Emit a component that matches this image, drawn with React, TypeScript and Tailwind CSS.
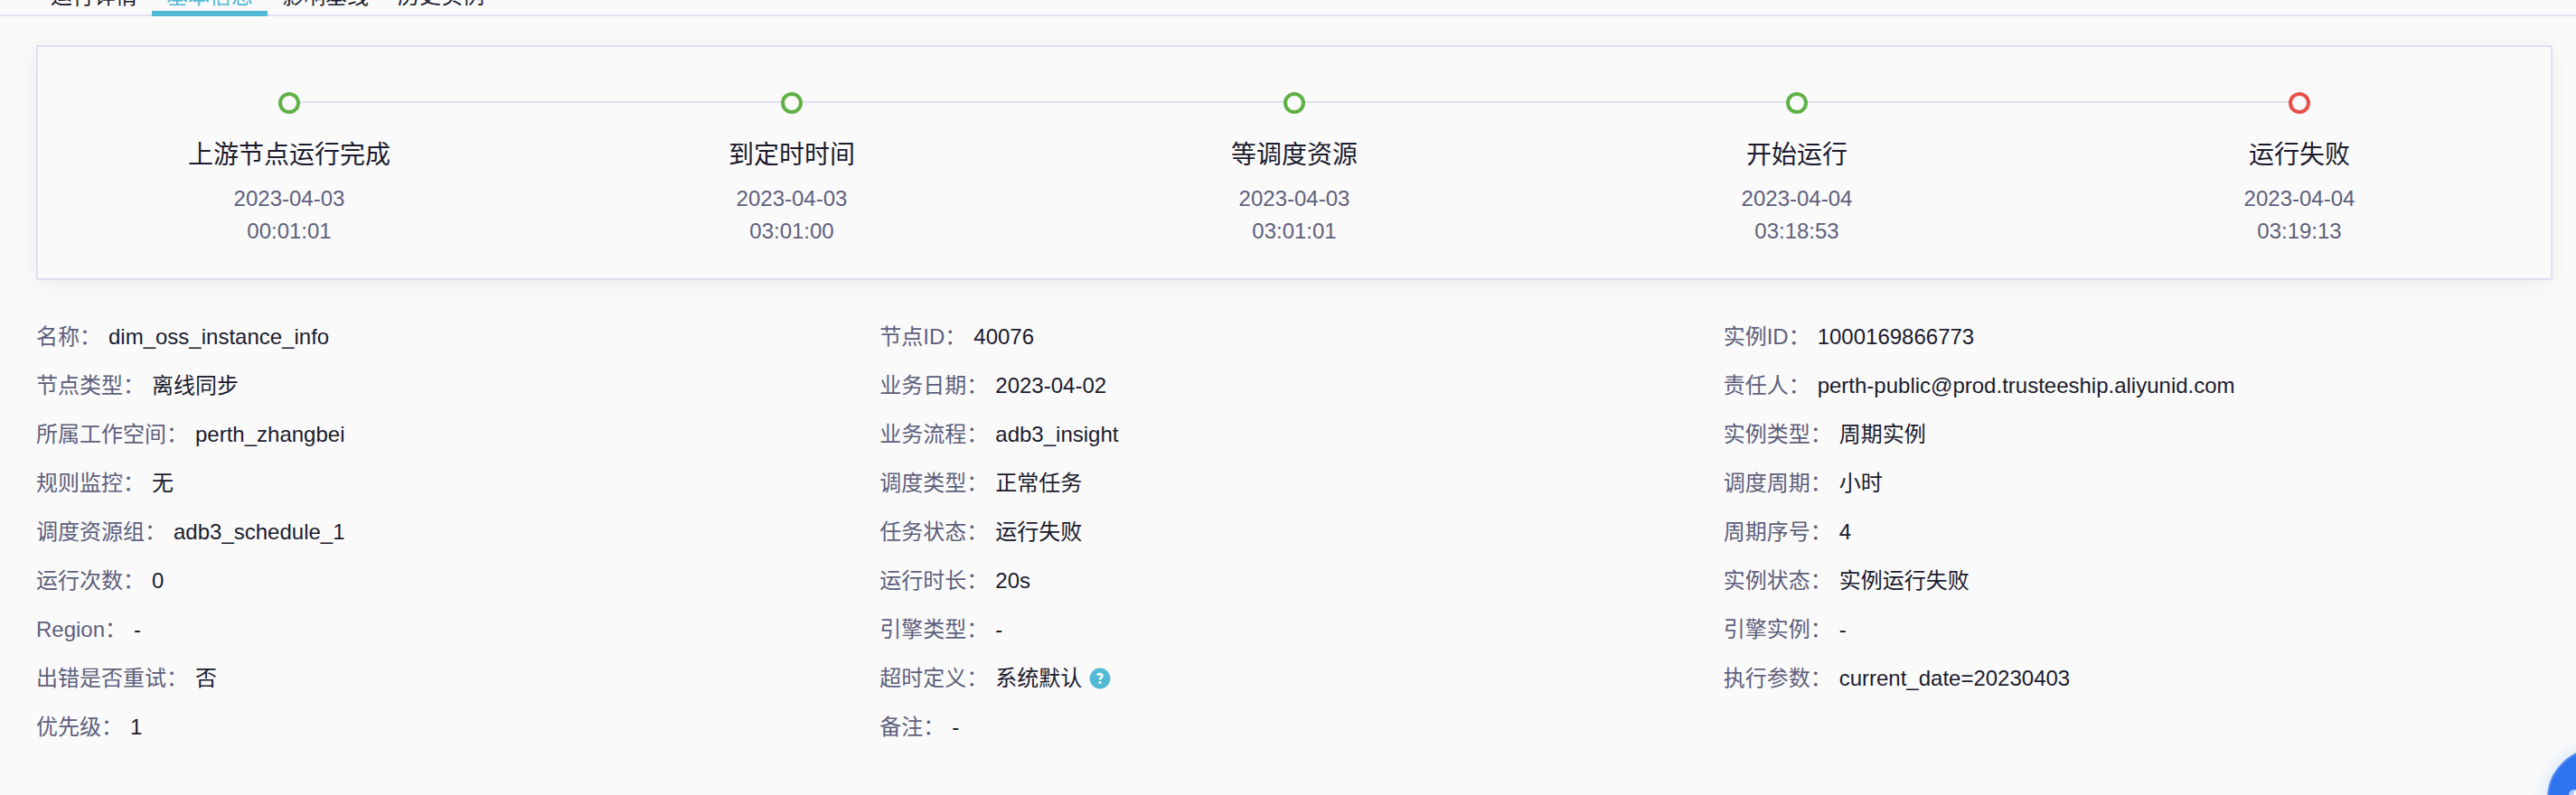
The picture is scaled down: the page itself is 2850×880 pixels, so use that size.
import React, { useState } from 'react';

type Step = { title: string; date: string; time: string; failed?: boolean };
type Field = { label: string; value: string; help?: boolean };

const tabs = ['运行详情', '基本信息', '影响基线', '历史实例'];

const steps: Step[] = [
  { title: '上游节点运行完成', date: '2023-04-03', time: '00:01:01' },
  { title: '到定时时间', date: '2023-04-03', time: '03:01:00' },
  { title: '等调度资源', date: '2023-04-03', time: '03:01:01' },
  { title: '开始运行', date: '2023-04-04', time: '03:18:53' },
  { title: '运行失败', date: '2023-04-04', time: '03:19:13', failed: true },
];

const columns: Field[][] = [
  [
    { label: '名称', value: 'dim_oss_instance_info' },
    { label: '节点类型', value: '离线同步' },
    { label: '所属工作空间', value: 'perth_zhangbei' },
    { label: '规则监控', value: '无' },
    { label: '调度资源组', value: 'adb3_schedule_1' },
    { label: '运行次数', value: '0' },
    { label: 'Region', value: '-' },
    { label: '出错是否重试', value: '否' },
    { label: '优先级', value: '1' },
  ],
  [
    { label: '节点ID', value: '40076' },
    { label: '业务日期', value: '2023-04-02' },
    { label: '业务流程', value: 'adb3_insight' },
    { label: '调度类型', value: '正常任务' },
    { label: '任务状态', value: '运行失败' },
    { label: '运行时长', value: '20s' },
    { label: '引擎类型', value: '-' },
    { label: '超时定义', value: '系统默认', help: true },
    { label: '备注', value: '-' },
  ],
  [
    { label: '实例ID', value: '1000169866773' },
    { label: '责任人', value: 'perth-public@prod.trusteeship.aliyunid.com' },
    { label: '实例类型', value: '周期实例' },
    { label: '调度周期', value: '小时' },
    { label: '周期序号', value: '4' },
    { label: '实例状态', value: '实例运行失败' },
    { label: '引擎实例', value: '-' },
    { label: '执行参数', value: 'current_date=20230403' },
  ],
];

function HelpIcon() {
  return (
    <svg viewBox="0 0 24 24" className="w-6 h-6" aria-hidden="true">
      <circle cx="12" cy="12" r="11.4" fill="#52b9d5" />
      <path
        d="M8.800 8.200c.9-.8 1.900-1.100 3-1.100 1.600 0 2.600.8 2.600 2.100 0 1.900-2.500 2.100-2.500 4.400"
        fill="none"
        stroke="#fff"
        strokeWidth="2.600"
      />
      <circle cx="11.900" cy="16.600" r="1.600" fill="#fff" />
    </svg>
  );
}

function StepItem({ step, last }: { step: Step; last: boolean }) {
  return (
    <li className="relative flex flex-col items-center">
      {/* Connector to the next step */}
      {!last && <span className="absolute top-[10px] left-[calc(50%+12px)] w-[calc(100%-24px)] h-0.5 bg-[#dfe1f0]" />}
      <span
        className={`w-6 h-6 rounded-full border-4 ${step.failed ? 'border-[#e84f47]' : 'border-[#5fb146]'}`}
      />
      <h3 className="mt-[26px] text-[28px] leading-10 text-[#1b1b2d]">{step.title}</h3>
      <p className="mt-[10px] text-2xl leading-9 text-[#5e607c]">{step.date}</p>
      <p className="text-2xl leading-9 text-[#5e607c]">{step.time}</p>
    </li>
  );
}

export default function App() {
  const [active, setActive] = useState(1);

  return (
    <div className="min-h-screen overflow-hidden bg-[#fafafa] font-['Liberation_Sans','Noto_Sans_CJK_SC',sans-serif] text-2xl text-[#1b1b2d]">
      {/* Tabs */}
      <nav className="flex items-end h-[18px] pl-10 overflow-hidden shadow-[inset_0_-2px_0_#dfe1f0]">
        {tabs.map((tab, i) => (
          <button
            key={tab}
            type="button"
            onClick={() => setActive(i)}
            className={`shrink-0 px-4 leading-8 border-b-[6px] ${
              i === active ? 'border-[#52b9d5] text-[#52b9d5]' : 'border-transparent'
            }`}
          >
            {tab}
          </button>
        ))}
      </nav>

      {/* Run progress */}
      <section className="mt-8 ml-10 mr-[26px] pt-[50px] pb-[34px] border-2 border-[#dfe1f0] shadow-[0_4px_24px_rgba(0,0,0,0.06)]">
        <ol className="grid grid-cols-5">
          {steps.map((step, i) => (
            <StepItem key={step.title} step={step} last={i === steps.length - 1} />
          ))}
        </ol>
      </section>

      {/* Instance details */}
      <section className="grid grid-cols-3 mt-9 pl-10 pr-[10px]">
        {columns.map((fields, i) => (
          <dl key={i}>
            {fields.map((field) => (
              <div key={field.label} className="flex items-center gap-2 h-[54px]">
                <dt className="text-[#5e607c]">{field.label}：</dt>
                <dd className="flex items-center gap-2">
                  {field.value}
                  {field.help && (
                    <button type="button" aria-label="超时定义说明">
                      <HelpIcon />
                    </button>
                  )}
                </dd>
              </div>
            ))}
          </dl>
        ))}
      </section>

      {/* Assistant button, tucked into the corner */}
      <button
        type="button"
        aria-label="助手"
        className="fixed -right-20 -bottom-[60px] w-28 h-28 rounded-full border-2 border-[#5a93f2] bg-[#3073ee] shadow-[0_0_20px_rgba(47,111,237,0.2)]"
      >
        <svg viewBox="0 0 108 108" className="w-full h-full" aria-hidden="true">
          <circle cx="28" cy="50" r="6" fill="#b4cbf8" />
          <circle cx="54" cy="58" r="28" fill="#fff" />
        </svg>
      </button>
    </div>
  );
}
